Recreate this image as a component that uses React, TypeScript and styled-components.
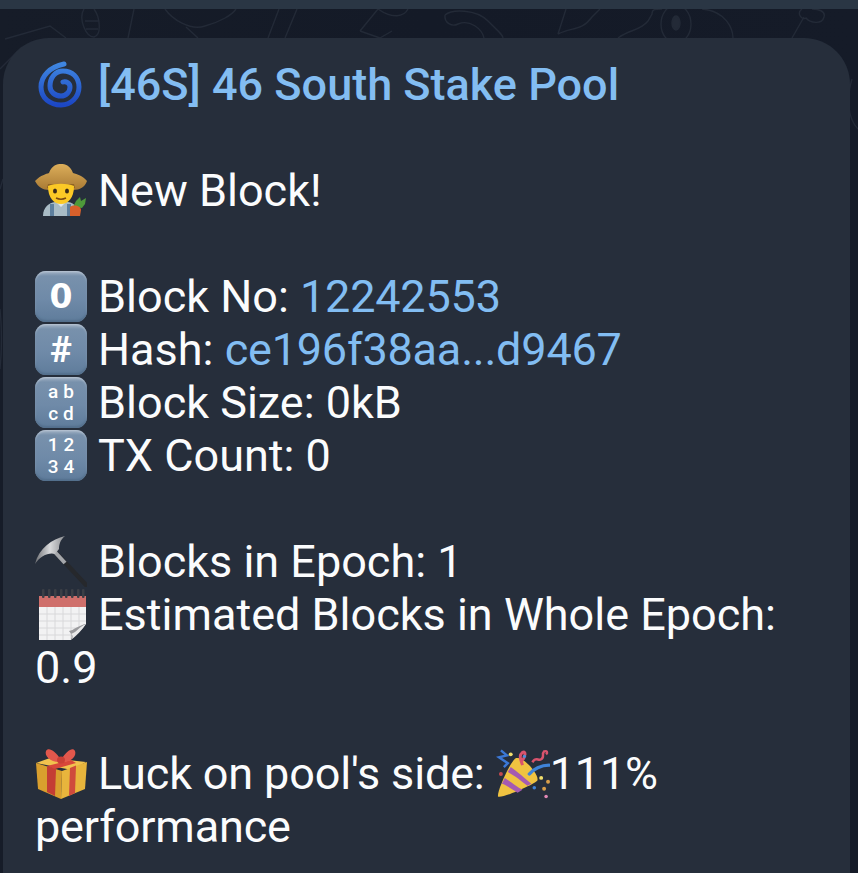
import styled, { createGlobalStyle } from "styled-components";

const GlobalStyle = createGlobalStyle`
  html, body {
    margin: 0;
    height: 100%;
    background: #141a26;
    overflow: hidden;
  }
`;

const Screen = styled.div`
  width: 858px;
  height: 873px;
  display: flex;
  flex-direction: column;
  overflow: hidden;
`;

const TopBar = styled.div`
  height: 9px;
  flex: none;
  background: #2a3644;
`;

const Chat = styled.div`
  position: relative;
  flex: 1;
  min-height: 0;
  padding: 29px 8px 0 3px;
  background: linear-gradient(90deg, #161c28, #141a27 50%, #151b28);
`;

const Wallpaper = styled.svg`
  position: absolute;
  top: 0;
  left: 0;
  width: 858px;
  height: 864px;
  fill: none;
  stroke: #232a37;
  stroke-width: 1.4;
`;

const Bubble = styled.div`
  position: relative;
  height: 100%;
  box-sizing: border-box;
  padding: 20px 40px 0 32px;
  background: #262e3b;
  border-radius: 46px 46px 0 0;
  color: #fbfcfd;
  font-family: Roboto, "Noto Sans", sans-serif;
  font-size: 45px;
  line-height: 53px;
`;

const Line = styled.div<{ $gap?: boolean }>`
  min-height: 53px;
  margin-bottom: ${(props) => (props.$gap ? "53px" : "0")};
`;

const Title = styled.span`
  color: #83bdf2;
  font-weight: 500;
`;

const Link = styled.span`
  color: #82bdf2;
  letter-spacing: -0.2px;
`;

const Tight = styled.span`
  letter-spacing: -0.15px;
`;

const Glyph = styled.svg<{ $w?: number }>`
  display: inline-block;
  width: ${(props) => props.$w || 52}px;
  height: 52px;
  margin-right: ${(props) => (props.$w ? 0 : 11)}px;
  vertical-align: top;
`;

const Keycap = styled.span`
  display: inline-flex;
  flex-direction: column;
  align-items: center;
  justify-content: center;
  box-sizing: border-box;
  width: 52px;
  height: 51px;
  margin: 1px 11px 1px 0;
  vertical-align: top;
  border-radius: 11px;
  background: linear-gradient(180deg, #a3b3c5 0%, #7891ac 10%, #6f8aa8 55%, #5f7c9b 100%);
  box-shadow: inset 0 -2px 2px #536f8c, inset 0 1px 2px #b7c4d3;
  color: #fff;
  font-family: Roboto, "Liberation Sans", sans-serif;
  font-weight: 700;
`;

const CapBig = styled.span<{ $wide?: boolean }>`
  font-family: ${(props) => (props.$wide ? '"DejaVu Sans", sans-serif' : "inherit")};
  font-size: ${(props) => (props.$wide ? 33 : 37)}px;
  line-height: 44px;
`;

const CapSmall = styled.span`
  font-size: 19px;
  line-height: 22px;
  font-weight: 500;
  letter-spacing: 5px;
  margin-right: -5px;
`;

const Spiral = () => (
  <Glyph viewBox="0 0 52 52">
    <defs>
      <linearGradient id="spiralG" x1="0" y1="0" x2="0" y2="1">
        <stop offset="0" stopColor="#3f86e0" />
        <stop offset="1" stopColor="#1c47c4" />
      </linearGradient>
    </defs>
    <path
      d="M29 6 C15 9 6 18 6 29 C6 40 15 47 26 47 C36 47 44 39 44 29 C44 19 37 13 28 13 C20 13 15 20 15 28 C15 34 20 38 26 38 C31 38 35 34 35 29 C35 25 31 23 28 24"
      fill="none"
      stroke="url(#spiralG)"
      strokeWidth="5"
      strokeLinecap="round"
    />
  </Glyph>
);

const Farmer = () => (
  <Glyph viewBox="0 0 52 52">
    <defs>
      <linearGradient id="hatG" x1="0" y1="0" x2="0" y2="1">
        <stop offset="0" stopColor="#dcae5a" />
        <stop offset="1" stopColor="#a97a34" />
      </linearGradient>
    </defs>
    <path d="M8 52 C8 43 14 39 20 38 L33 38 C40 39 43 44 44 52 Z" fill="#a9bcc6" />
    <path d="M17 40 L17 52 M34 40 L34 52" stroke="#5d7f9e" strokeWidth="4" />
    <path d="M21 38 L26 43 L31 38 Z" fill="#dfe7ea" />
    <path d="M0 17 C6 11 11 10 14 9 C17 1 22 0 26 0 C30 0 35 1 38 9 C42 10 48 12 52 17 C50 23 45 26 38 26 L14 26 C8 26 3 23 0 17 Z" fill="url(#hatG)" />
    <path d="M13 20 L39 20 L40 24 L12 24 Z" fill="#8f6426" />
    <path d="M13 22 C13 34 19 40 26 40 C33 40 39 34 39 22 C32 19 20 19 13 22 Z" fill="#fbc926" />
    <ellipse cx="20" cy="27" rx="2" ry="2.500" fill="#3a2a18" />
    <ellipse cx="32" cy="27" rx="2" ry="2.500" fill="#3a2a18" />
    <path d="M21 34 C24 35.500 28 35.500 31 34" stroke="#7a4a12" strokeWidth="1.500" fill="none" />
    <path d="M41 37 L45 33 L46 37 L51 34 L50 40 L47 44 L38 43 Z" fill="#4e9a3a" />
    <path d="M35 43 C39 40 46 42 46 46 L45 52 L35 52 Z" fill="#d8602b" />
  </Glyph>
);

const Pick = () => (
  <Glyph viewBox="0 0 52 52">
    <defs>
      <linearGradient id="pickG" x1="0" y1="0" x2="1" y2="0">
        <stop offset="0" stopColor="#6d6f73" />
        <stop offset="0.5" stopColor="#d9dadc" />
        <stop offset="1" stopColor="#8a8c90" />
      </linearGradient>
    </defs>
    <path d="M22 19 L51 50" stroke="#26282c" strokeWidth="4.500" strokeLinecap="round" />
    <path d="M19 16 L30 28" stroke="#a5a7ab" strokeWidth="4" />
    <path d="M30 1 C17 4 4 13 0 29 C5 21 14 17 20 19 L24 14 C24 10 25 5 30 1 Z" fill="url(#pickG)" />
  </Glyph>
);

const Calendar = () => (
  <Glyph viewBox="0 0 52 52">
    <rect x="4" y="8" width="47" height="44" fill="#f2f2f3" />
    <rect x="4" y="8" width="47" height="11" fill="#cf6f6b" />
    {[8, 14, 20, 26, 31, 37, 43, 48].map((x) => (
      <rect key={x} x={x - 1} y="1" width="2.500" height="9" rx="1" fill="#3b3f46" />
    ))}
    {[26, 33, 40, 47].map((y) => (
      <path key={y} d={`M4 ${y} H51`} stroke="#d8d8da" strokeWidth="1" />
    ))}
    {[12, 20, 28, 36, 44].map((x) => (
      <path key={x} d={`M${x} 19 V52`} stroke="#d8d8da" strokeWidth="1" />
    ))}
    <path d="M51 36 C44 38 40 44 36 52 L51 52 Z" fill="#262e3b" />
    <path d="M51 36 C44 37 39 42 34 43 C37 46 37 49 36 52 C41 48 47 42 51 36 Z" fill="#9a9a9d" />
    <path d="M51 36 C45 38 42 44 36 46 C38 47 38 49 37 51 C42 47 47 42 51 36 Z" fill="#e9e9ea" />
  </Glyph>
);

const Gift = () => (
  <Glyph viewBox="0 0 52 52">
    <path d="M1 16 L15 11 L51 15 L37 23 Z" fill="#f1c24e" />
    <path d="M1 16 L27 24 L26 52 L3 42 Z" fill="#d99f2e" />
    <path d="M27 24 L52 15 L50 42 L26 52 Z" fill="#e8b53c" />
    <path d="M12 19 L21 22 L20 49 L12 45 Z" fill="#c43d34" />
    <path d="M35 21 L41 18.500 L40 46 L34 49 Z" fill="#cf4a3c" />
    <path d="M12 19 L36 13 L41 16 L20 22 Z" fill="#d8463a" />
    <path d="M26 13 C20 3 13 0 11 4 C9 9 16 16 26 15 C36 16 42 9 40 4 C38 0 32 3 26 13 Z" fill="#e2574c" />
    <ellipse cx="26" cy="13" rx="4" ry="3.500" fill="#c93f36" />
  </Glyph>
);

const Popper = () => (
  <Glyph $w={54} viewBox="0 0 55 52">
    <path d="M2 50 C1 44 15 14 20 11 C27 8 45 28 42 34 C38 38 7 52 2 50 Z" fill="#f0c341" />
    <path d="M9 31 C15 35 22 41 27 43 L22 46 C17 43 10 38 6 37 Z" fill="#a55ab2" />
    <path d="M15 20 C21 24 31 33 36 37 L32 39 C26 34 18 28 12 25 Z" fill="#a55ab2" />
    <path d="M34 27 C38 22 46 18 54 18" stroke="#3f83d8" strokeWidth="3.500" fill="none" strokeLinecap="round" />
    <path d="M27 18 C25 12 23 8 27 5 C31 3 30 10 26 14" stroke="#d9536d" strokeWidth="3" fill="none" />
    <path d="M37 15 C41 9 43 14 46 12 C50 10 46 7 49 4 C52 3 53 5 51 7" stroke="#d9536d" strokeWidth="2.500" fill="none" />
    <path d="M5 3 L11 8 L3 10 L12 16 L8 20" stroke="#3b78d6" strokeWidth="2.500" fill="none" />
    <circle cx="15" cy="7" r="2" fill="#f3df6c" />
    <circle cx="29" cy="9" r="1.600" fill="#4a90e0" />
    <circle cx="5" cy="27" r="2" fill="#c2494f" />
    <circle cx="46" cy="31" r="2" fill="#f3df6c" />
    <circle cx="53" cy="35" r="2" fill="#d99f4a" />
    <circle cx="39" cy="41" r="1.800" fill="#3f83d8" />
    <circle cx="49" cy="42" r="2" fill="#d99f4a" />
    <circle cx="51" cy="50" r="1.800" fill="#e389b6" />
  </Glyph>
);

const WallpaperDoodles = () => (
  <Wallpaper viewBox="0 0 858 864">
    <path d="M84 0 C78 10 86 28 94 28 C102 26 100 8 94 0 M85 12 H99 M86 20 H98" />
    <path d="M5 30 L50 17 L66 29 M0 60 L22 38" />
    <path d="M128 29 L134 0 M165 0 C172 10 190 22 205 17 C220 13 232 6 236 0 M186 18 L198 29" />
    <path d="M268 29 L279 0 M285 29 L297 0" />
    <path d="M360 22 L378 0 M360 22 L380 29 M378 0 C392 10 404 8 408 0 M380 29 L392 22" />
    <path d="M445 6 C452 0 476 0 488 12 C500 24 503 26 503 29 M445 6 C444 14 452 18 458 15 C470 10 482 20 484 29" />
    <path d="M558 25 L566 0 M558 25 C572 18 582 22 592 8 L600 0" />
    <path d="M618 29 C630 20 640 22 648 12 L652 5 C652 0 655 0 662 0" />
    <ellipse cx="676" cy="15" rx="15" ry="19" />
    <ellipse cx="676" cy="14" rx="4" ry="7" fill="#232a37" />
    <path d="M702 0 C726 2 733 20 733 29" />
    <path d="M792 29 L804 8 M802 0 C796 4 802 12 806 9 C810 14 822 16 824 8 C826 2 818 0 812 0" />
    <path d="M852 70 C846 90 848 110 858 120 M0 180 L3 170 M0 300 C2 320 2 340 0 360" />
  </Wallpaper>
);

export default function App() {
  return (
    <Screen>
      <GlobalStyle />
      <TopBar />
      <Chat>
        <WallpaperDoodles />
        <Bubble>
          <Line $gap>
            <Spiral />
            <Title>[46S] 46 South Stake Pool</Title>
          </Line>
          <Line $gap>
            <Farmer />
            New Block!
          </Line>
          <Line>
            <Keycap>
              <CapBig $wide>0</CapBig>
            </Keycap>
            Block No: <Link>12242553</Link>
          </Line>
          <Line>
            <Keycap>
              <CapBig>#</CapBig>
            </Keycap>
            Hash: <Link>ce196f38aa...d9467</Link>
          </Line>
          <Line>
            <Keycap>
              <CapSmall>ab</CapSmall>
              <CapSmall>cd</CapSmall>
            </Keycap>
            Block Size: 0kB
          </Line>
          <Line $gap>
            <Keycap>
              <CapSmall>12</CapSmall>
              <CapSmall>34</CapSmall>
            </Keycap>
            TX Count: 0
          </Line>
          <Line>
            <Pick />
            Blocks in Epoch: 1
          </Line>
          <Line $gap>
            <Calendar />
            Estimated Blocks in Whole Epoch: 0.9
          </Line>
          <Line>
            <Gift />
            <Tight>Luck on pool's side: </Tight>
            <Popper />
            <Tight>111%</Tight> <Tight>performance</Tight>
          </Line>
        </Bubble>
      </Chat>
    </Screen>
  );
}
